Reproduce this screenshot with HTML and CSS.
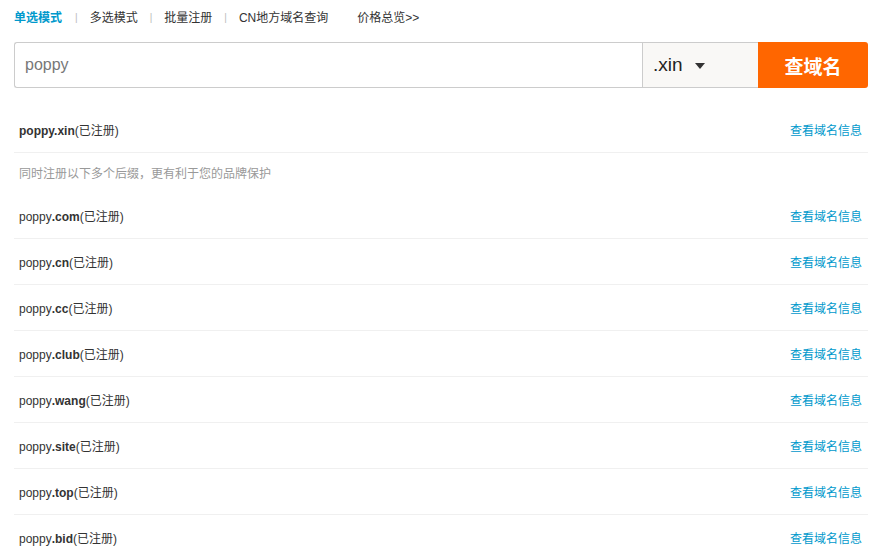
FILE: index.html
```html
<!DOCTYPE html>
<html lang="zh-CN">
<head>
  <meta charset="UTF-8">
  <title>域名查询</title>
  <link rel="stylesheet" href="styles.css">
</head>
<body>
  <div class="wrap">
    <ul class="tabs">
      <li class="on">单选模式</li>
      <li class="sep">|</li>
      <li>多选模式</li>
      <li class="sep">|</li>
      <li>批量注册</li>
      <li class="sep">|</li>
      <li>CN地方域名查询</li>
      <li class="price">价格总览&gt;&gt;</li>
    </ul>

    <form class="search">
      <input type="text" class="kw" value="poppy">
      <div class="suffix">.xin <span class="arrow"></span></div>
      <button type="button" class="go">查域名</button>
    </form>

    <div class="row main">
      <span><b>poppy.xin</b>(已注册)</span>
      <a href="#">查看域名信息</a>
    </div>
    <div class="hint">同时注册以下多个后缀，更有利于您的品牌保护</div>
    <div class="row"><span>poppy<b>.com</b>(已注册)</span><a href="#">查看域名信息</a></div>
    <div class="row"><span>poppy<b>.cn</b>(已注册)</span><a href="#">查看域名信息</a></div>
    <div class="row"><span>poppy<b>.cc</b>(已注册)</span><a href="#">查看域名信息</a></div>
    <div class="row"><span>poppy<b>.club</b>(已注册)</span><a href="#">查看域名信息</a></div>
    <div class="row"><span>poppy<b>.wang</b>(已注册)</span><a href="#">查看域名信息</a></div>
    <div class="row"><span>poppy<b>.site</b>(已注册)</span><a href="#">查看域名信息</a></div>
    <div class="row"><span>poppy<b>.top</b>(已注册)</span><a href="#">查看域名信息</a></div>
    <div class="row"><span>poppy<b>.bid</b>(已注册)</span><a href="#">查看域名信息</a></div>
  </div>
</body>
</html>
```

FILE: styles.css
```css
body {
  margin: 0;
  font-family: "Liberation Sans", Arial, "Noto Sans CJK SC", sans-serif;
  font-size: 12px;
  color: #333;
  background: #fff;
}

.wrap {
  padding: 0 8px 0 14px;
}

.tabs {
  list-style: none;
  margin: 0;
  padding: 10px 0 0;
  display: flex;
  height: 22px;
  line-height: 16px;
  font-size: 12px;
  color: #333;
}

.tabs li.on {
  color: #0099cc;
  font-weight: bold;
  padding-right: 1px;
}

.tabs li.sep {
  color: #bbb;
  padding: 0 12px;
  font-size: 10px;
}

.tabs li.price {
  margin-left: 29px;
}

.search {
  display: flex;
  height: 46px;
  margin: 10px 0 19px;
}

.kw {
  flex: 1;
  box-sizing: border-box;
  height: 46px;
  margin: 0;
  border: 1px solid #ccc;
  border-right: none;
  border-radius: 3px 0 0 3px;
  padding: 0 10px;
  font-family: inherit;
  font-size: 16px;
  color: #777;
  outline: none;
}

.suffix {
  width: 116px;
  box-sizing: border-box;
  border: 1px solid #ccc;
  border-right: none;
  background: #f9f8f6;
  padding-left: 10px;
  display: flex;
  align-items: center;
  font-size: 19px;
  color: #222;
}

.arrow {
  display: inline-block;
  margin-left: 12px;
  margin-top: 2px;
  border-left: 5px solid transparent;
  border-right: 5px solid transparent;
  border-top: 6px solid #333;
}

.go {
  width: 110px;
  height: 46px;
  border: none;
  background: #ff6600;
  color: #fff;
  font-family: inherit;
  font-size: 19px;
  font-weight: bold;
  border-radius: 0 3px 3px 0;
  cursor: pointer;
}

.row {
  display: flex;
  justify-content: space-between;
  align-items: center;
  height: 45px;
  border-bottom: 1px solid #f0f0f0;
  padding: 0 6px 0 5px;
}

.row b {
  font-weight: bold;
}

.row a {
  color: #0099cc;
  text-decoration: none;
}

.hint {
  height: 40px;
  line-height: 42px;
  overflow: hidden;
  padding-left: 5px;
  color: #999;
}
```
